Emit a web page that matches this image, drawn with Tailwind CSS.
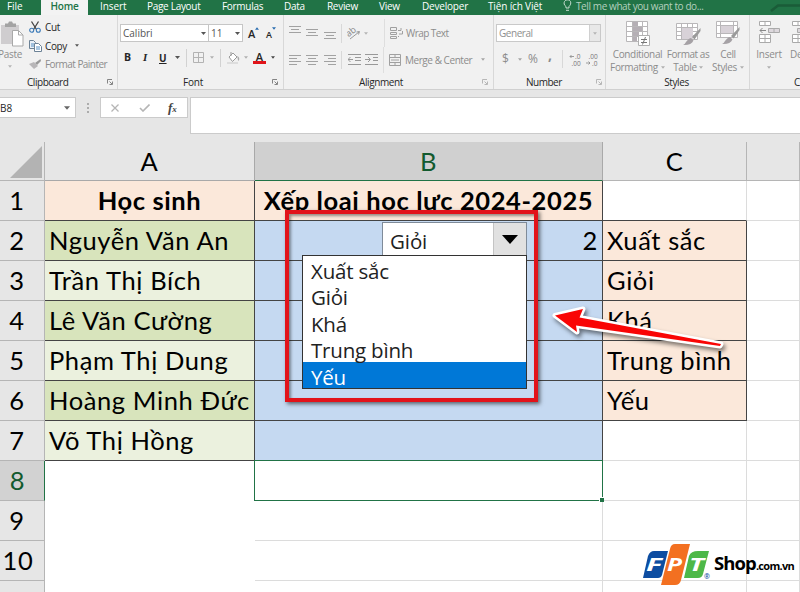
<!DOCTYPE html>
<html lang="vi">
<head>
    <meta charset="UTF-8">
    <meta name="viewport" content="width=device-width, initial-scale=1.0">
    <title>Excel - Combo box</title>
    <script src="https://cdn.jsdelivr.net/npm/@tailwindcss/browser@4"></script>
</head>
<body class="w-[800px] h-[592px] overflow-hidden bg-[#e6e6e6] font-['Open_Sans','Noto_Sans',sans-serif] text-[10px] leading-none text-[#262626]">
    <!-- shared icons -->
    <svg class="hidden">
        <symbol id="caret" viewBox="0 0 5 3"><path d="M0 0h5L2.500 3z" fill="currentColor"/></symbol>
        <symbol id="launcher" viewBox="0 0 6 6"><path d="M.5 4.500V.5H5M2.500 2.500L5 5M5.500 2.500v3h-3" fill="none" stroke="currentColor" stroke-width=".9"/></symbol>
        <symbol id="left" viewBox="0 0 12 10"><path d="M0 .5h12M0 3.500h8M0 6.500h12M0 9.500h8" stroke="#a2a2a2"/></symbol>
        <symbol id="center" viewBox="0 0 12 10"><path d="M0 .5h12M2 3.500h8M0 6.500h12M2 9.500h8" stroke="#a2a2a2"/></symbol>
        <symbol id="right" viewBox="0 0 12 10"><path d="M0 .5h12M4 3.500h8M0 6.500h12M4 9.500h8" stroke="#a2a2a2"/></symbol>
        <symbol id="bars" viewBox="0 0 12 8"><path d="M0 .5h12M2 3.500h8M0 6.500h12" stroke="#a2a2a2"/></symbol>
        <symbol id="brush" viewBox="0 0 18 18"><path d="M17.500 0L9 9l2.500 2.500L17.500 3z" fill="#9a9a9a"/><path d="M8 10l2.500 2.500C9 16 5 17.500 0 17c3-1 3.500-6 8-7z" fill="#a5a1a5"/></symbol>
    </svg>

    <!-- tabs -->
    <nav class="relative flex h-[15px] bg-[#217346] text-white text-[10px] leading-[12px] tracking-[-0.3px] whitespace-nowrap">
        <div class="w-[41px] pl-[7px] tracking-[-0.1px]">File</div>
        <div class="w-[47px] bg-[#f3f3f3] text-center text-[#217346] font-semibold tracking-[-0.2px]">Home</div>
        <div class="w-[59px] pl-[12px] tracking-[-0.1px]">Insert</div>
        <div class="w-[75px]">Page Layout</div>
        <div class="w-[62px]">Formulas</div>
        <div class="w-[43px]">Data</div>
        <div class="w-[52px]">Review</div>
        <div class="w-[43px]">View</div>
        <div class="w-[66px] tracking-[-0.2px]">Developer</div>
        <div class="w-[75px] tracking-[-0.15px]">Tiện ích Việt</div>
        <svg class="w-[9px] h-[11px] shrink-0" viewBox="0 0 9 11"><path d="M3 8V6.500C.8 5 .8 3 1.500 1.500 3-.8 6.500-.5 7.500 1.500 8.200 3.500 7.500 5 6 6.500V8zM3 10.300h3" fill="none" stroke="#c8ddd0"/></svg>
        <div class="pl-[4px] text-[#b4d0bf] tracking-[-0.4px]">Tell me what you want to do...</div>
        <svg class="absolute right-0 top-0 w-[30px] h-[15px]" viewBox="0 0 30 15"><path d="M1 11L8 5.500H30" fill="none" stroke="#1a5c38" stroke-width="2.500"/></svg>
    </nav>

    <!-- ribbon -->
    <section class="flex h-[75px] bg-[#f1f1f1] border-b border-[#d0d0d0] overflow-hidden">
        <!-- Clipboard -->
        <div class="w-[117px] shrink-0 flex flex-col">
            <div class="h-[60px] flex">
                <div class="w-[29px] pt-[6px] text-[#8c8c8c]">
                    <svg class="w-[24px] h-[26px]" viewBox="0 0 24 26"><path d="M1 4h18v19H1z" fill="#cfcdcf"/><path d="M5 2.500h3L9 .5h3l1 2h3v3.500H5z" fill="#a3a3a3"/><path d="M12.500 9.500h6l4.500 4.500v11h-10.500z" fill="#fff" stroke="#a9a9a9"/><path d="M18.500 9.500V14H23" fill="none" stroke="#a9a9a9"/></svg>
                    <div class="mt-[2px] -ml-[2px] text-[10px] tracking-[-0.3px]">Paste</div>
                    <svg class="mt-[6px] ml-[8px] w-[4px] h-[3px] text-[#b5b5b5]"><use href="#caret"/></svg>
                </div>
                <div class="flex flex-col pt-[3px] whitespace-nowrap tracking-[-0.4px]">
                    <div class="flex items-center h-[18px] gap-[4px]">
                        <svg class="w-[12px] h-[12px]" viewBox="0 0 12 12"><path d="M2.500.5l5 8M9.500.5l-5 8" stroke="#444" stroke-width="1.300"/><circle cx="2.700" cy="9.300" r="2" fill="none" stroke="#3a7ab8" stroke-width="1.100"/><circle cx="9.300" cy="9.300" r="2" fill="none" stroke="#3a7ab8" stroke-width="1.100"/></svg>
                        <span>Cut</span>
                    </div>
                    <div class="flex items-center h-[19px] gap-[3px]">
                        <svg class="w-[13px] h-[12px]" viewBox="0 0 13 12"><path d="M.5.5h4l2 2v6h-6z" fill="#e9f0f7" stroke="#6c8296"/><path d="M5.500 3.500h4l3 3v5h-7z" fill="#fff" stroke="#6c8296"/><path d="M2 4h3M2 6h3M7 7h4M7 9h4" stroke="#5790c4"/></svg>
                        <span>Copy</span>
                        <svg class="ml-[5px] w-[4px] h-[3px] text-[#555]"><use href="#caret"/></svg>
                    </div>
                    <div class="flex items-center h-[18px] gap-[4px] text-[#8c8c8c]">
                        <svg class="w-[12px] h-[10px]" viewBox="0 0 12 10"><path d="M11.500 0L6 4l2 2L12 2z" fill="#999"/><path d="M0 5l5-2 4 4-4 3z" fill="#b8b6b8"/></svg>
                        <span class="tracking-[-0.55px]">Format Painter</span>
                    </div>
                </div>
            </div>
            <div class="flex h-[14px] items-center pl-[27px]">
                <span class="w-[80px] tracking-[-0.45px]">Clipboard</span>
                <svg class="w-[6px] h-[6px] text-[#777]"><use href="#launcher"/></svg>
            </div>
        </div>
        <!-- Font -->
        <div class="w-[166px] shrink-0 flex flex-col border-l border-[#d8d8d8]">
            <div class="flex items-start pt-[9px] h-[29px] pl-[2px]">
                <div class="flex items-center justify-between w-[89px] h-[18px] bg-white border border-[#c6c6c6] px-[2px] text-[#555]">Calibri<svg class="w-[5px] h-[3px]"><use href="#caret"/></svg></div>
                <div class="flex items-center justify-between w-[35px] h-[18px] -ml-px bg-white border border-[#c6c6c6] px-[2px] text-[#555]">11<svg class="w-[5px] h-[3px]"><use href="#caret"/></svg></div>
                <div class="relative w-[18px] pl-[5px] pt-[4px] text-[11px] font-semibold">A<svg class="absolute left-[12px] top-[3px] w-[4px] h-[3px] rotate-180 text-[#2a6db0]"><use href="#caret"/></svg></div>
                <div class="relative w-[18px] pl-[5px] pt-[6px] text-[9px] font-semibold">A<svg class="absolute left-[11px] top-[3px] w-[4px] h-[3px] text-[#2a6db0]"><use href="#caret"/></svg></div>
            </div>
            <div class="flex items-center h-[31px] pl-[6px] pb-[4px]">
                <b class="w-[19px] text-[10.500px]">B</b>
                <i class="w-[16px] font-bold font-['Liberation_Serif',serif] text-[11px]">I</i>
                <span class="w-[16px] font-bold underline">U</span>
                <svg class="w-[5px] h-[3px] text-[#555]"><use href="#caret"/></svg>
                <span class="ml-[6px] w-px h-[18px] bg-[#d2d2d2]"></span>
                <svg class="ml-[6px] w-[11px] h-[11px]" viewBox="0 0 11 11"><path d="M.5.5h10v10H.5zM5.500 0v11M0 5.500h11" fill="none" stroke="#b3b3b3"/></svg>
                <svg class="ml-[6px] w-[4px] h-[3px] text-[#b0b0b0]"><use href="#caret"/></svg>
                <span class="ml-[6px] w-px h-[18px] bg-[#d2d2d2]"></span>
                <svg class="ml-[6px] w-[13px] h-[12px]" viewBox="0 0 13 12"><path d="M2 5l4-4 4 4-4.500 4.500z" fill="#fff" stroke="#9a9a9a"/><path d="M4 0v4" stroke="#9a9a9a"/><path d="M10 4c3 1 2.500 4 1.500 5-1-1-.5-3-1.500-5z" fill="#aaa"/><path d="M0 11h11" stroke="#ddd" stroke-width="2"/></svg>
                <svg class="ml-[4px] w-[4px] h-[3px] text-[#b0b0b0]"><use href="#caret"/></svg>
                <span class="ml-[5px] w-[13px] h-[13px] border-b-[3px] border-[#e0141a] text-center font-semibold text-[11px] leading-[11px]">A</span>
                <svg class="ml-[5px] w-[4px] h-[3px] text-[#444]"><use href="#caret"/></svg>
            </div>
            <div class="flex h-[14px] items-center pl-[65px]">
                <span class="w-[89px] tracking-[-0.2px]">Font</span>
                <svg class="w-[6px] h-[6px] text-[#777]"><use href="#launcher"/></svg>
            </div>
        </div>
        <!-- Alignment -->
        <div class="w-[210px] shrink-0 flex flex-col border-l border-[#d8d8d8] whitespace-nowrap text-[#8c8c8c]">
            <div class="flex items-center h-[33px] pl-[5px] pt-[3px]">
                <svg class="w-[12px] h-[8px] -mt-[6px]"><use href="#bars"/></svg>
                <svg class="ml-[5px] w-[12px] h-[8px]"><use href="#bars"/></svg>
                <svg class="ml-[6px] w-[12px] h-[8px] mt-[6px]"><use href="#bars"/></svg>
                <span class="ml-[5px] w-px h-[19px] bg-[#d8d8d8]"></span>
                <svg class="ml-[5px] w-[14px] h-[13px]" viewBox="0 0 14 13"><path d="M3 12L12 5M12.500 4.500l-3 .5M12.500 4.500l-1 3" stroke="#999" fill="none"/><text x="0" y="8" font-size="9" fill="#888" transform="rotate(-38 4 7)">ab</text></svg>
                <svg class="ml-[3px] w-[4px] h-[3px] text-[#b5b5b5]"><use href="#caret"/></svg>
                <span class="ml-[16px] w-px h-[28px] bg-[#dedede]"></span>
                <svg class="ml-[5px] w-[13px] h-[12px]" viewBox="0 0 13 12"><path d="M.5.5h6v3h-6zM.5 5.500h6v2h-6zM.5 9.500h6v2h-6zM8 9.500h1M8 3.500h3V1M12.500 4v3H9" fill="none" stroke="#a0a0a0"/></svg>
                <span class="ml-[3px] tracking-[-0.55px]">Wrap Text</span>
            </div>
            <div class="flex items-center h-[27px] pb-[4px] pl-[5px]">
                <svg class="w-[12px] h-[10px]"><use href="#left"/></svg>
                <svg class="ml-[5px] w-[12px] h-[10px]"><use href="#center"/></svg>
                <svg class="ml-[6px] w-[12px] h-[10px]"><use href="#right"/></svg>
                <span class="ml-[5px] w-px h-[18px] bg-[#d8d8d8]"></span>
                <svg class="ml-[6px] w-[13px] h-[11px]" viewBox="0 0 13 11"><path d="M0 .5h13M7 3.500h6M7 6.500h6M0 10.500h13M0 5.500h5M2.500 3L0 5.500 2.500 8" fill="none" stroke="#999"/></svg>
                <svg class="ml-[4px] w-[13px] h-[11px]" viewBox="0 0 13 11"><path d="M0 .5h13M8 3.500h5M8 6.500h5M0 10.500h13M0 5.500h5M3 3l2.500 2.500L3 8" fill="none" stroke="#999"/></svg>
                <span class="ml-[5px] w-px h-[26px] bg-[#dedede]"></span>
                <svg class="ml-[5px] w-[12px] h-[12px]" viewBox="0 0 12 12"><path d="M.5.5h11v11H.5zM0 3.500h12M0 8.500h12M6 0v3M6 9v3M2 6h8" fill="none" stroke="#a0a0a0"/></svg>
                <span class="ml-[4px] w-[76px] tracking-[-0.45px]">Merge &amp; Center</span>
                <svg class="w-[4px] h-[3px] text-[#a5a5a5]"><use href="#caret"/></svg>
            </div>
            <div class="flex h-[14px] items-center pl-[75px] text-[#262626]">
                <span class="w-[123px] tracking-[-0.4px]">Alignment</span>
                <svg class="w-[6px] h-[6px] text-[#b0b0b0]"><use href="#launcher"/></svg>
            </div>
        </div>
        <!-- Number -->
        <div class="w-[112px] shrink-0 flex flex-col border-l border-[#d8d8d8] text-[#8c8c8c]">
            <div class="h-[34px] pt-[9px] pl-[2px]">
                <div class="flex w-[105px] h-[18px] bg-white border border-[#c9c9c9]">
                    <span class="flex-1 pl-[2px] leading-[16px] text-[#8f8f8f] tracking-[-0.45px]">General</span>
                    <span class="w-[11px] bg-[#e8e8e8] border-l border-[#d0d0d0] flex items-center justify-center"><svg class="w-[4px] h-[3px] text-[#b5b5b5]"><use href="#caret"/></svg></span>
                </div>
            </div>
            <div class="flex items-center h-[26px] pb-[6px] pl-[8px] text-[12px]">
                <span class="w-[16px]">$</span>
                <svg class="w-[4px] h-[3px] text-[#a5a5a5]"><use href="#caret"/></svg>
                <span class="ml-[6px] w-[20px]">%</span>
                <span class="w-[14px] font-bold text-[14px] leading-[12px] -mt-[8px]">,</span>
                <span class="w-px h-[18px] bg-[#d8d8d8]"></span>
                <svg class="ml-[6px] w-[13px] h-[13px]" viewBox="0 0 13 13"><path d="M1 3.500h4M2.500 2L1 3.500 2.500 5" fill="none" stroke="#888" stroke-width=".8"/><text x="6" y="6" font-size="6.500" fill="#777">.0</text><text x="2.500" y="12.500" font-size="6.500" fill="#777">.00</text></svg>
                <svg class="ml-[4px] w-[13px] h-[13px]" viewBox="0 0 13 13"><path d="M0 10h4M2.500 8.500L4 10l-1.500 1.500" fill="none" stroke="#888" stroke-width=".8"/><text x="2.500" y="6" font-size="6.500" fill="#777">.00</text><text x="6" y="12.500" font-size="6.500" fill="#777">.0</text></svg>
            </div>
            <div class="flex h-[14px] items-center pl-[32px] text-[#262626]">
                <span class="w-[70px] tracking-[-0.5px] font-medium">Number</span>
                <svg class="w-[6px] h-[6px] text-[#b0b0b0]"><use href="#launcher"/></svg>
            </div>
        </div>
        <!-- Styles -->
        <div class="w-[144px] shrink-0 flex flex-col border-l border-[#d8d8d8] text-[#8c8c8c]">
            <div class="h-[60px] flex pt-[6px] text-center leading-[13px] whitespace-nowrap tracking-[-0.35px]">
                <div class="w-[61px] pl-[2px] flex flex-col items-center">
                    <svg class="w-[24px] h-[25px]" viewBox="0 0 24 25"><path d="M.5.5h21v20H.5zM0 5.500h22M0 10.500h22M0 15.500h22M6.500 0v20M16.500 0v20" fill="#fff" stroke="#b9b7b9"/><path d="M7 1h5v4H7zM7 6h9v4H7zM7 11h6v4H7zM7 16h4v4H7z" fill="#b5afb5"/><path d="M12.500 14.500h11v10h-11z" fill="#fff" stroke="#b0b0b0"/><path d="M15 18.500h6M15 21.500h6M19.500 16l-3 7.500" stroke="#777"/></svg>
                    <div class="mt-[2px]">Conditional</div>
                    <div class="flex items-center gap-[3px]">Formatting<svg class="w-[4px] h-[3px] text-[#b0b0b0]"><use href="#caret"/></svg></div>
                </div>
                <div class="w-[42px] flex flex-col items-center">
                    <svg class="w-[25px] h-[25px]" viewBox="0 0 25 25"><path d="M.5 2.500h21v16H.5zM0 6.500h22M0 10.500h22M0 14.500h22M5.500 2v16M11.500 2v16M16.500 2v16" fill="#fff" stroke="#b9b7b9"/><path d="M6 7h11v11H6z" fill="#d8d2d8"/><use href="#brush" x="7" y="7" width="18" height="18"/></svg>
                    <div class="mt-[2px] tracking-[-0.45px]">Format as</div>
                    <div class="flex items-center gap-[2px]">Table<svg class="w-[4px] h-[3px] text-[#b0b0b0]"><use href="#caret"/></svg></div>
                </div>
                <div class="w-[38px] flex flex-col items-center">
                    <svg class="w-[25px] h-[25px]" viewBox="0 0 25 25"><path d="M.5.500h21v16H.5zM0 4.500h22M0 12.500h22M4.500 0v16M17.500 0v16" fill="#fff" stroke="#b9b7b9"/><path d="M5 5h12v7H5z" fill="#d8d2d8"/><use href="#brush" x="6" y="6" width="18" height="18"/></svg>
                    <div class="mt-[2px]">Cell</div>
                    <div class="flex items-center gap-[3px]">Styles<svg class="w-[4px] h-[3px] text-[#b0b0b0]"><use href="#caret"/></svg></div>
                </div>
            </div>
            <div class="h-[14px] pr-[2px] text-center leading-[14px] text-[#262626] font-medium tracking-[-0.4px]">Styles</div>
        </div>
        <!-- Cells -->
        <div class="w-[80px] shrink-0 flex flex-col border-l border-[#d8d8d8] text-[#8c8c8c]">
            <div class="h-[60px] flex pt-[6px] leading-[13px] tracking-[-0.25px]">
                <div class="w-[38px] flex flex-col items-center">
                    <svg class="w-[21px] h-[22px]" viewBox="0 0 21 22"><path d="M.5.5h11v4H.5zM6 0v4M.5 13.500h11v8H.5zM6 13v8M0 17.500h12" fill="#fff" stroke="#aaa"/><path d="M9.500 7.500h11v4h-11zM15 7v4" fill="#ddd8dd" stroke="#aaa"/><path d="M1 9.500h6M3.500 7L1 9.500 3.500 12" fill="none" stroke="#888"/></svg>
                    <div class="mt-[5px]">Insert</div>
                    <svg class="mt-[5px] w-[4px] h-[3px] text-[#b0b0b0]"><use href="#caret"/></svg>
                </div>
                <div class="pl-[2px]">
                    <svg class="ml-[2px] w-[21px] h-[22px]" viewBox="0 0 21 22"><path d="M.5.5h11v4H.5zM6 0v4M.5 13.500h11v8H.5zM6 13v8M0 17.500h12" fill="#fff" stroke="#aaa"/><path d="M5.500 7.500h11v4h-11z" fill="#ddd8dd" stroke="#aaa"/></svg>
                    <div class="mt-[5px]">Delete</div>
                </div>
            </div>
            <div class="h-[14px] pl-[44px] leading-[14px] text-[#262626]">Cells</div>
        </div>
    </section>

    <!-- formula bar -->
    <section class="flex h-[52px] pt-[7px] items-start">
        <div class="flex items-center justify-between w-[76px] h-[21px] bg-white border border-l-0 border-[#cbcbcb] pr-[5px]"><span>B8</span><svg class="w-[6px] h-[4px] text-[#666]"><use href="#caret"/></svg></div>
        <svg class="ml-[11px] mt-[6px] w-[2px] h-[10px]" viewBox="0 0 2 10"><path d="M0 1h2M0 5h2M0 9h2" stroke="#999" stroke-width="1.500"/></svg>
        <div class="ml-[11px] flex items-center w-[88px] h-[21px] bg-white border border-[#cbcbcb]">
            <svg class="ml-[10px] w-[8px] h-[8px]" viewBox="0 0 8 8"><path d="M.5.5l7 7M7.500.5l-7 7" stroke="#b5b5b5" stroke-width="1.300"/></svg>
            <svg class="ml-[20px] w-[11px] h-[8px]" viewBox="0 0 11 8"><path d="M1 4l3 3L10.500.5" fill="none" stroke="#b5b5b5" stroke-width="1.600"/></svg>
            <i class="ml-[18px] font-bold font-['Liberation_Serif',serif] text-[13px] text-[#444]">f<span class="text-[9px]">x</span></i>
        </div>
        <div class="ml-[2px] flex-1 h-[37px] bg-white border border-r-0 border-[#cbcbcb]"></div>
    </section>

    <!-- sheet -->
    <main class="relative grid grid-cols-[45px_210px_348px_144px_53px] grid-rows-[39px_repeat(11,40px)] bg-white font-['Lato','Noto_Sans',sans-serif] text-[25.500px] tracking-[0.600px] text-black whitespace-nowrap *:leading-[39px] *:border-r *:border-b">
        <div class="bg-[#e6e6e6] border-[#b5b5b5] flex justify-end items-end p-[2px]"><svg class="w-[32px] h-[32px]" viewBox="0 0 32 32"><path d="M32 0v32H0z" fill="#b3b3b3"/></svg></div>
        <div class="bg-[#e6e6e6] border-[#a9a9a9] text-center">A</div>
        <div class="bg-[#d0d0d0] border-r-[#a9a9a9] border-b-2 border-b-[#217346] text-center text-[#125a2e]">B</div>
        <div class="bg-[#e6e6e6] border-[#b5b5b5] text-center">C</div>
        <div class="bg-[#e6e6e6] border-[#b5b5b5]"></div>

        <div class="bg-[#e6e6e6] border-[#b5b5b5] pr-[10px] text-center">1</div>
        <div class="bg-[#fbe8da] border-[#444] text-center font-bold">Học sinh</div>
        <div class="bg-[#fbe8da] border-[#444] text-center font-bold">Xếp loại học lực 2024-2025</div>
        <div class="border-r-[#dcdcdc] border-b-[#444]"></div>
        <div class="border-[#dcdcdc]"></div>

        <div class="bg-[#e6e6e6] border-[#b5b5b5] pr-[10px] text-center">2</div>
        <div class="bg-[#d8e4bc] border-[#444] pl-[4px]">Nguyễn Văn An</div>
        <div class="bg-[#c5d9f1] border-[#444] pr-[4px] text-right">2</div>
        <div class="bg-[#fbe8da] border-[#444] pl-[4px]">Xuất sắc</div>
        <div class="border-[#dcdcdc]"></div>

        <div class="bg-[#e6e6e6] border-[#b5b5b5] pr-[10px] text-center">3</div>
        <div class="bg-[#ebf1de] border-[#444] pl-[4px]">Trần Thị Bích</div>
        <div class="bg-[#c5d9f1] border-[#444]"></div>
        <div class="bg-[#fbe8da] border-[#444] pl-[4px]">Giỏi</div>
        <div class="border-[#dcdcdc]"></div>

        <div class="bg-[#e6e6e6] border-[#b5b5b5] pr-[10px] text-center">4</div>
        <div class="bg-[#d8e4bc] border-[#444] pl-[4px]">Lê Văn Cường</div>
        <div class="bg-[#c5d9f1] border-[#444]"></div>
        <div class="bg-[#fbe8da] border-[#444] pl-[4px]">Khá</div>
        <div class="border-[#dcdcdc]"></div>

        <div class="bg-[#e6e6e6] border-[#b5b5b5] pr-[10px] text-center">5</div>
        <div class="bg-[#ebf1de] border-[#444] pl-[4px]">Phạm Thị Dung</div>
        <div class="bg-[#c5d9f1] border-[#444]"></div>
        <div class="bg-[#fbe8da] border-[#444] pl-[4px]">Trung bình</div>
        <div class="border-[#dcdcdc]"></div>

        <div class="bg-[#e6e6e6] border-[#b5b5b5] pr-[10px] text-center">6</div>
        <div class="bg-[#d8e4bc] border-[#444] pl-[4px]">Hoàng Minh Đức</div>
        <div class="bg-[#c5d9f1] border-[#444]"></div>
        <div class="bg-[#fbe8da] border-[#444] pl-[4px]">Yếu</div>
        <div class="border-[#dcdcdc]"></div>

        <div class="bg-[#e6e6e6] border-[#b5b5b5] pr-[10px] text-center">7</div>
        <div class="bg-[#ebf1de] border-[#444] pl-[4px]">Võ Thị Hồng</div>
        <div class="bg-[#c5d9f1] border-[#444]"></div>
        <div class="border-[#dcdcdc]"></div>
        <div class="border-[#dcdcdc]"></div>

        <div class="bg-[#d2d2d2] border-b-[#b5b5b5] border-r-2 border-r-[#217346] pr-[9px] text-center text-[#125a2e]">8</div>
        <div class="border-transparent"></div>
        <div class="relative border-[#dcdcdc]">
            <!-- active cell -->
            <div class="absolute -left-px -top-px -right-px -bottom-px border-[1.5px] border-[#217346]"></div>
            <div class="absolute -right-[2px] -bottom-[2px] w-[5px] h-[5px] bg-[#217346] border-t border-l border-white"></div>
        </div>
        <div class="border-[#dcdcdc]"></div>
        <div class="border-[#dcdcdc]"></div>

        <div class="bg-[#e6e6e6] border-[#b5b5b5] pr-[10px] text-center">9</div>
        <div class="border-transparent"></div>
        <div class="border-[#dcdcdc]"></div>
        <div class="border-[#dcdcdc]"></div>
        <div class="border-[#dcdcdc]"></div>

        <div class="bg-[#e6e6e6] border-[#b5b5b5] pr-[8px] text-center">10</div>
        <div class="border-transparent"></div>
        <div class="border-[#dcdcdc]"></div>
        <div class="border-[#dcdcdc]"></div>
        <div class="border-[#dcdcdc]"></div>

        <div class="bg-[#e6e6e6] border-[#b5b5b5] pr-[8px] text-center">11</div>
        <div class="border-transparent"></div>
        <div class="border-[#dcdcdc]"></div>
        <div class="border-[#dcdcdc]"></div>
        <div class="border-[#dcdcdc]"></div>
    </main>

    <!-- combo box form control -->
    <div class="absolute left-[382px] top-[222px] w-[145px] h-[34px] flex bg-white border border-[#7f8b99] font-['Open_Sans','Noto_Sans',sans-serif] text-[20.500px] text-[#222]">
        <span class="flex-1 pl-[7px] leading-[37px] tracking-[-0.1px]">Giỏi</span>
        <span class="w-[33px] bg-[#e1e1e1] border-l border-[#c4c4c4] flex items-center justify-center"><svg class="w-[16px] h-[9px]" viewBox="0 0 16 9"><path d="M0 0h16L8 9z" fill="#000"/></svg></span>
    </div>
    <ul class="absolute left-[302px] top-[255px] w-[225px] h-[134px] bg-white border border-[#333] font-['Open_Sans','Noto_Sans',sans-serif] text-[20.500px] text-[#222] tracking-[-0.200px] *:h-[26.400px] *:pl-[8px] *:leading-[30px]">
        <li>Xuất sắc</li>
        <li>Giỏi</li>
        <li>Khá</li>
        <li>Trung bình</li>
        <li class="bg-[#0078d7] text-white">Yếu</li>
    </ul>

    <!-- highlight frame and arrow -->
    <div class="absolute left-[285px] top-[210px] w-[253px] h-[192px] border-[4px] border-[#e2131a] shadow-[2px_2px_4px_rgba(0,0,0,0.55),inset_2px_2px_3px_rgba(0,0,0,0.4)]"></div>
    <svg class="absolute left-[545px] top-[295px] w-[190px] h-[65px] drop-shadow-[2px_3px_2px_rgba(0,0,0,0.5)]" viewBox="545 295 190 65">
        <path d="M555 315.500L583 309L579.500 317.500L721 344L720 346L576 325.500L577 332z" fill="#f90505" stroke="#fff" stroke-width="5" stroke-linejoin="round" paint-order="stroke"/>
    </svg>

    <!-- FPT Shop logo -->
    <div class="absolute left-[642px] top-[542px] flex items-start">
        <svg class="w-[70px] h-[44px]" viewBox="0 0 70 44" font-family="Open Sans" font-weight="700" font-style="italic" fill="#fff" font-size="17">
            <path d="M12 9H26L20 33Q19 36 16 36H1L6 14Q8 9 12 9z" fill="#0d4da1"/>
            <path d="M33 2H48L39 38Q38 43 33 43H19L28 7Q29 2 33 2z" fill="#f37021"/>
            <path d="M56 9H67L61 32Q60 36 56 36H42L47 14Q49 9 56 9z" fill="#4db848"/>
            <text x="4" y="29" textLength="16" lengthAdjust="spacingAndGlyphs">F</text>
            <text x="25" y="29" textLength="15" lengthAdjust="spacingAndGlyphs">P</text>
            <text x="47" y="29" textLength="15" lengthAdjust="spacingAndGlyphs">T</text>
            <text x="62" y="37" font-size="7" font-style="normal" font-weight="600" fill="#0d4da1">®</text>
        </svg>
        <div class="ml-[2px] mt-[11px] font-bold text-black text-[18.500px] leading-[20px] tracking-[-0.9px]">Shop<span class="text-[11px] tracking-[-0.700px]">.com.vn</span></div>
    </div>
</body>
</html>
